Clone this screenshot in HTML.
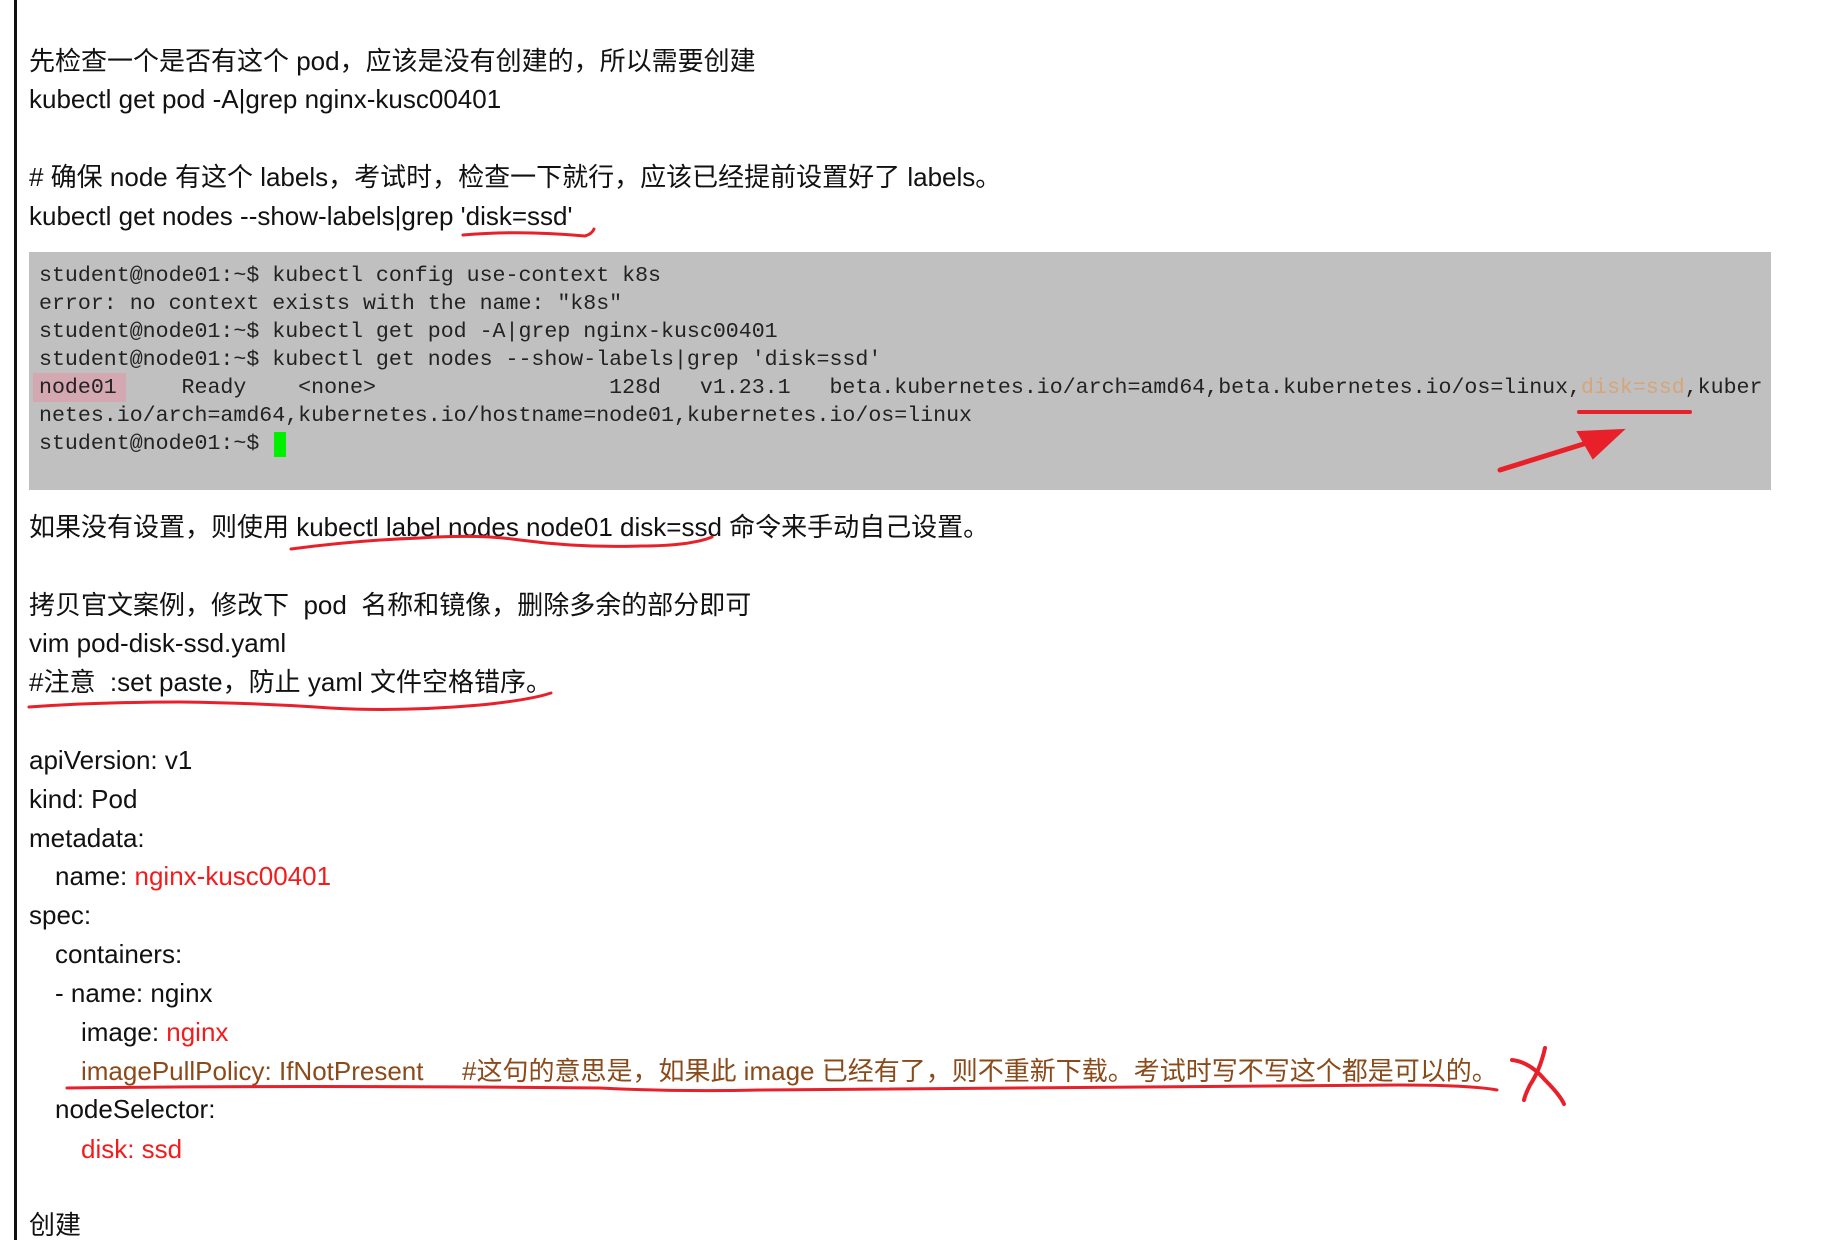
<!DOCTYPE html>
<html><head><meta charset="utf-8"><style>
html,body{margin:0;padding:0;background:#fff;width:1833px;height:1240px;overflow:hidden;position:relative}
.b{position:absolute;left:14px;top:0;width:3px;height:1240px;background:#111}
.l{position:absolute;left:29px;height:39px;line-height:39px;font-family:"Liberation Sans","Noto Sans CJK SC",sans-serif;font-size:26px;color:#111;white-space:pre}
.r{color:#f31c1c}
.br{color:#8a4a1a}
.term{position:absolute;left:29px;top:252px;width:1742px;height:238px;background:#c0c0c0}
.t{position:absolute;left:39px;height:28px;line-height:28px;font-family:"Liberation Mono",monospace;font-size:21.6px;color:#222;white-space:pre}
svg{position:absolute;left:0;top:0}
</style></head><body>
<div class="b"></div>
<div class="l" style="top:42px">先检查一个是否有这个 pod，应该是没有创建的，所以需要创建</div>
<div class="l" style="top:80px">kubectl get pod -A|grep nginx-kusc00401</div>
<div class="l" style="top:158px"># 确保 node 有这个 labels，考试时，检查一下就行，应该已经提前设置好了 labels。</div>
<div class="l" style="top:197px">kubectl get nodes --show-labels|grep 'disk=ssd'</div>
<div class="term"></div>
<div style="position:absolute;left:33px;top:373px;width:93px;height:29px;background:#d4a8b0"></div>
<div style="position:absolute;left:274px;top:432px;width:12px;height:25px;background:#00f000"></div>
<div class="t" style="top:262px">student@node01:~$ kubectl config use-context k8s</div>
<div class="t" style="top:290px">error: no context exists with the name: "k8s"</div>
<div class="t" style="top:318px">student@node01:~$ kubectl get pod -A|grep nginx-kusc00401</div>
<div class="t" style="top:346px">student@node01:~$ kubectl get nodes --show-labels|grep 'disk=ssd'</div>
<div class="t" style="top:374px">node01     Ready    &lt;none&gt;                  128d   v1.23.1   beta.kubernetes.io/arch=amd64,beta.kubernetes.io/os=linux,<span style="color:#d6a57a">disk=ssd</span>,kuber</div>
<div class="t" style="top:402px">netes.io/arch=amd64,kubernetes.io/hostname=node01,kubernetes.io/os=linux</div>
<div class="t" style="top:430px">student@node01:~$ </div>
<div class="l" style="top:508px">如果没有设置，则使用 kubectl label nodes node01 disk=ssd 命令来手动自己设置。</div>
<div class="l" style="top:586px">拷贝官文案例，修改下  pod  名称和镜像，删除多余的部分即可</div>
<div class="l" style="top:624px">vim pod-disk-ssd.yaml</div>
<div class="l" style="top:663px">#注意  :set paste，防止 yaml 文件空格错序。</div>
<div class="l" style="top:741px">apiVersion: v1</div>
<div class="l" style="top:780px">kind: Pod</div>
<div class="l" style="top:819px">metadata:</div>
<div class="l" style="top:857px;left:55px">name: <span class="r">nginx-kusc00401</span></div>
<div class="l" style="top:896px">spec:</div>
<div class="l" style="top:935px;left:55px">containers:</div>
<div class="l" style="top:974px;left:55px">- name: nginx</div>
<div class="l" style="top:1013px;left:81px">image: <span class="r">nginx</span></div>
<div class="l br" style="top:1052px;left:81px">imagePullPolicy: IfNotPresent</div>
<div class="l br" style="top:1052px;left:462px">#这句的意思是，如果此 image 已经有了，则不重新下载。考试时写不写这个都是可以的。</div>
<div class="l" style="top:1090px;left:55px">nodeSelector:</div>
<div class="l r" style="top:1130px;left:81px">disk: ssd</div>
<div class="l" style="top:1206px">创建</div>
<svg width="1833" height="1240" viewBox="0 0 1833 1240" fill="none" stroke="#e8202a" stroke-linecap="round">
<path d="M463 235 Q520 230 585 236 Q592 234 594 229" stroke-width="3"/>
<path d="M1579 412 L1690 412" stroke-width="4"/>
<path d="M1500 470 L1590 442" stroke-width="5"/>
<path d="M1578 432 L1623 430 L1593 458 Z" fill="#e8202a" stroke-width="2"/>
<path d="M291 549 Q360 540 420 538 Q480 534 520 540 Q580 548 640 546 Q690 546 712 537" stroke-width="3"/>
<path d="M29 707 Q100 702 180 702 Q260 703 330 708 Q400 712 480 705 Q530 700 551 693" stroke-width="3"/>
<path d="M67 1088 Q300 1085 600 1088 Q680 1092 760 1090 Q1100 1086 1400 1085 Q1470 1085 1497 1090" stroke-width="3"/>
<path d="M1512 1060 Q1530 1062 1545 1080 Q1560 1095 1564 1104" stroke-width="4"/>
<path d="M1545 1048 Q1540 1070 1530 1085 Q1525 1095 1524 1100" stroke-width="4"/>
</svg>
</body></html>
